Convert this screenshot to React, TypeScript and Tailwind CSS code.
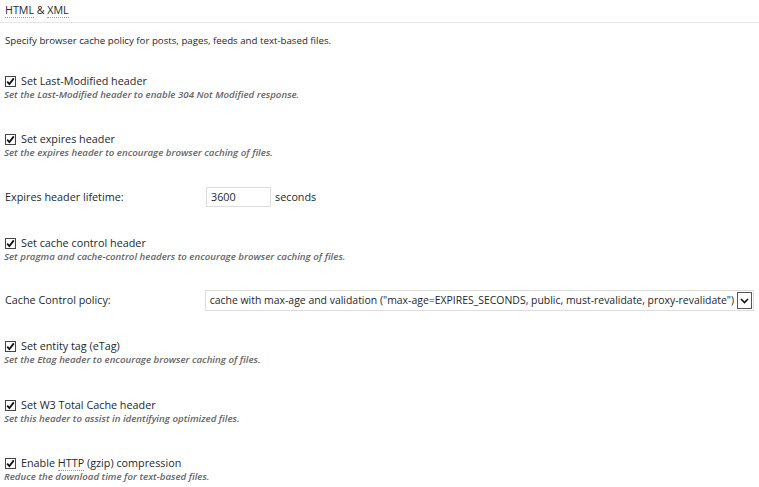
import React from 'react';

const Check: React.FC = () => (
  <svg width="11" height="11" viewBox="0 0 11 11" className="shrink-0">
    <rect x="0.5" y="0.5" width="10" height="10" fill="#fff" stroke="#444" />
    <path d="M2.2 5.6 L4.4 8 L8.8 2.4" fill="none" stroke="#111" strokeWidth="1.8" />
  </svg>
);

const Abbr: React.FC<{ children: React.ReactNode }> = ({ children }) => (
  <span className="border-b border-dotted border-[#999]">{children}</span>
);

type CheckRowProps = {
  label: React.ReactNode;
  desc: string;
  className?: string;
};

const CheckRow: React.FC<CheckRowProps> = ({ label, desc, className }) => (
  <div className={className}>
    <div className="flex items-center gap-[5px] h-[14px] text-[10.8px] leading-[14px] text-[#23282d]">
      <Check />
      <span>{label}</span>
    </div>
    <div className="h-[13px] text-[9.7px] leading-[13px] italic font-semibold text-[#666] -ml-px">{desc}</div>
  </div>
);

export default function App() {
  return (
    <div
      className="w-[759px] h-[487px] bg-white overflow-hidden"
      style={{ fontFamily: '"Open Sans", "Noto Sans", sans-serif' }}
    >
      <div className="px-[5px] pt-[3px] h-[20px] text-[10.7px] leading-[14px] text-[#23282d]">
        <Abbr>HTML</Abbr> &amp; <Abbr>XML</Abbr>
      </div>
      <div className="h-px bg-[#e5e5e5] mt-[2px]" />

      <div className="px-[5px]">
        <p className="mt-[11px] text-[9.7px] leading-[13px] text-[#23282d]">
          Specify browser cache policy for posts, pages, feeds and text-based files.
        </p>

        <CheckRow
          className="mt-[27px]"
          label="Set Last-Modified header"
          desc="Set the Last-Modified header to enable 304 Not Modified response."
        />
        <CheckRow
          className="mt-[31px]"
          label="Set expires header"
          desc="Set the expires header to encourage browser caching of files."
        />

        <div className="mt-[28px] flex items-center h-[20px] text-[10.8px] text-[#23282d]">
          <div className="w-[201px]">Expires header lifetime:</div>
          <div className="w-[65px] h-[20px] border border-[#ddd] pl-[4px] leading-[18px]">3600</div>
          <span className="ml-[4px]">seconds</span>
        </div>

        <CheckRow
          className="mt-[29px]"
          label="Set cache control header"
          desc="Set pragma and cache-control headers to encourage browser caching of files."
        />

        <div className="mt-[27px] flex items-center h-[21px] text-[10.8px] text-[#23282d]">
          <div className="w-[200px]">Cache Control policy:</div>
          <div className="w-[550px] h-[21px] border border-[#ddd] flex items-center pl-[4px] pr-[1px]">
            <span className="flex-1 whitespace-nowrap overflow-hidden text-[10.45px]">
              cache with max-age and validation ("max-age=EXPIRES_SECONDS, public, must-revalidate, proxy-revalidate")
            </span>
            <div className="w-[15px] h-[17px] border border-[#555] flex items-center justify-center bg-white">
              <svg width="9" height="6" viewBox="0 0 9 6">
                <path d="M1 1 L4.5 4.5 L8 1" fill="none" stroke="#111" strokeWidth="1.6" />
              </svg>
            </div>
          </div>
        </div>

        <CheckRow
          className="mt-[28px]"
          label="Set entity tag (eTag)"
          desc="Set the Etag header to encourage browser caching of files."
        />
        <CheckRow
          className="mt-[32px]"
          label="Set W3 Total Cache header"
          desc="Set this header to assist in identifying optimized files."
        />
        <CheckRow
          className="mt-[31px]"
          label={<>Enable <Abbr>HTTP</Abbr> (gzip) compression</>}
          desc="Reduce the download time for text-based files."
        />
      </div>
    </div>
  );
}
